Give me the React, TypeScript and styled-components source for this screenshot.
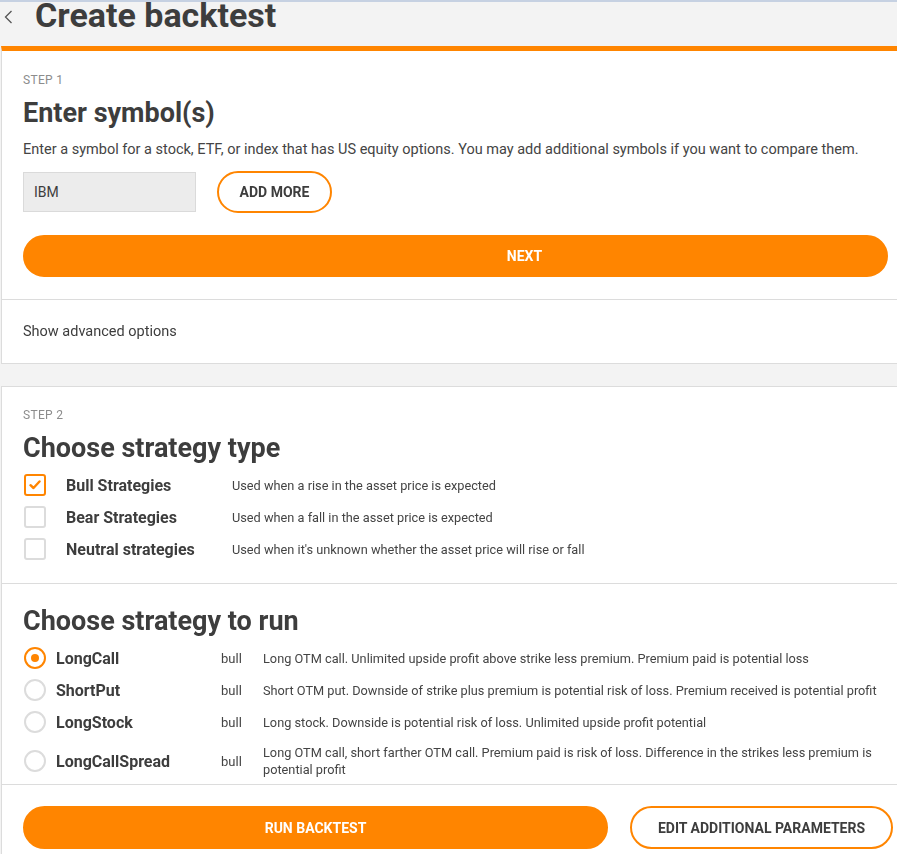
import React, { useState } from "react";
import styled, { createGlobalStyle } from "styled-components";

const ORANGE = "#ff8500";
const TEXT = "#3d3d3d";

const GlobalStyle = createGlobalStyle`
  html, body {
    margin: 0;
    padding: 0;
    background: #f3f3f3;
    font-family: Roboto, "Noto Sans", Arial, sans-serif;
    color: ${TEXT};
    overflow: hidden;
  }
  * { box-sizing: border-box; }
`;

const Page = styled.div`
  width: 897px;
  border-top: 2px solid #c6d1e2;
`;

const Header = styled.div`
  height: 44px;
  display: flex;
  align-items: flex-start;
  padding-left: 4px;
  gap: 22px;
`;

const BackButton = styled.button`
  border: 0;
  background: none;
  padding: 0;
  width: 9px;
  height: 14px;
  display: flex;
  margin-top: 8px;
  cursor: pointer;
`;

const Title = styled.h1`
  margin: -4px 0 0;
  font-size: 34px;
  font-weight: 700;
  line-height: 34px;
  color: ${TEXT};
`;

const Card = styled.div<{ $accent?: boolean }>`
  background: #fff;
  margin-left: 1px;
  margin-right: -4px;
  border: 1px solid #dcdcdc;
  border-top: ${(p) => (p.$accent ? `5px solid ${ORANGE}` : "1px solid #dcdcdc")};
`;

const Section = styled.div<{ $top?: number; $bottom?: number }>`
  padding: ${(p) => p.$top ?? 20}px 12px ${(p) => p.$bottom ?? 0}px 21px;
  & + & {
    border-top: 1px solid #dcdcdc;
  }
`;

const Step = styled.div`
  font-size: 12px;
  line-height: 16px;
  color: #8c8c8c;
  letter-spacing: 0.3px;
`;

const Heading = styled.h2<{ $gap?: number }>`
  margin: ${(p) => p.$gap ?? 9}px 0 0;
  font-size: 27px;
  font-weight: 700;
  line-height: 32px;
  color: ${TEXT};
`;

const Lead = styled.p`
  margin: 11px 0 0;
  font-size: 14.5px;
  line-height: 20px;
  color: #444;
`;

const InputRow = styled.div`
  display: flex;
  align-items: center;
  gap: 21px;
  margin-top: 11px;
  height: 42px;
`;

const SymbolInput = styled.input`
  width: 173px;
  height: 40px;
  border: 1px solid #dadada;
  background: #ececec;
  padding: 0 10px;
  font-family: inherit;
  font-size: 14px;
  color: ${TEXT};
  outline: none;
  caret-color: #222;
`;

const PillButton = styled.button<{ $filled?: boolean; $width?: number; $height?: number; $shift?: number }>`
  height: ${(p) => p.$height ?? 42}px;
  width: ${(p) => (p.$width ? `${p.$width}px` : "auto")};
  flex: ${(p) => (p.$width ? "none" : "1")};
  border-radius: 22px;
  border: 2px solid ${ORANGE};
  background: ${(p) => (p.$filled ? ORANGE : "#fff")};
  color: ${(p) => (p.$filled ? "#fff" : TEXT)};
  padding: 0 0 0 ${(p) => p.$shift ?? 0}px;
  font-family: inherit;
  font-size: 14px;
  font-weight: 700;
  text-transform: uppercase;
  cursor: pointer;
`;

const NextRow = styled.div`
  display: flex;
  margin-top: 22px;
  padding-bottom: 22px;
`;

const Advanced = styled.button`
  display: block;
  width: 100%;
  text-align: left;
  height: 63px;
  border: 0;
  background: none;
  padding: 0;
  font-family: inherit;
  font-size: 14.5px;
  color: ${TEXT};
  cursor: pointer;
`;

const Gap = styled.div`
  height: 22px;
`;

const TypeList = styled.div`
  margin-top: 5px;
  padding-bottom: 18px;
`;

const TypeRow = styled.label`
  display: grid;
  grid-template-columns: 43px 166px 1fr;
  align-items: center;
  height: 32px;
  cursor: pointer;
`;

const Box = styled.span<{ $checked?: boolean }>`
  width: 22px;
  height: 22px;
  border-radius: 3px;
  border: 2px solid ${(p) => (p.$checked ? ORANGE : "#dcdcdc")};
  display: flex;
  align-items: center;
  justify-content: center;
  margin-left: 1px;
`;

const Name = styled.span`
  font-size: 16px;
  font-weight: 700;
  color: ${TEXT};
`;

const Desc = styled.span`
  font-size: 12.75px;
  line-height: 17px;
  color: #444;
`;

const RunList = styled.div`
  margin-top: 5px;
`;

const RunRow = styled.label<{ $tall?: boolean }>`
  display: grid;
  grid-template-columns: 33px 165px 42px 1fr;
  align-items: center;
  min-height: ${(p) => (p.$tall ? 46 : 32)}px;
  cursor: pointer;
`;

const Radio = styled.span<{ $checked?: boolean }>`
  width: 22px;
  height: 22px;
  border-radius: 50%;
  border: 2px solid ${(p) => (p.$checked ? ORANGE : "#dcdcdc")};
  display: flex;
  align-items: center;
  justify-content: center;
  margin-left: 1px;
  &::after {
    content: "";
    width: 8px;
    height: 8px;
    border-radius: 50%;
    background: ${(p) => (p.$checked ? ORANGE : "transparent")};
  }
`;

const Kind = styled.span`
  font-size: 13px;
  color: #444;
`;

const Footer = styled.div`
  border-top: 1px solid #dcdcdc;
  display: flex;
  gap: 22px;
  padding: 21px 7px 8px 21px;
`;

const types = [
  { name: "Bull Strategies", desc: "Used when a rise in the asset price is expected" },
  { name: "Bear Strategies", desc: "Used when a fall in the asset price is expected" },
  { name: "Neutral strategies", desc: "Used when it's unknown whether the asset price will rise or fall" },
];

const strategies = [
  {
    name: "LongCall",
    desc: "Long OTM call. Unlimited upside profit above strike less premium. Premium paid is potential loss",
  },
  {
    name: "ShortPut",
    desc: "Short OTM put. Downside of strike plus premium is potential risk of loss. Premium received is potential profit",
  },
  {
    name: "LongStock",
    desc: "Long stock. Downside is potential risk of loss. Unlimited upside profit potential",
  },
  {
    name: "LongCallSpread",
    desc: "Long OTM call, short farther OTM call. Premium paid is risk of loss. Difference in the strikes less premium is potential profit",
  },
];

const Check = () => (
  <svg width="12" height="10" viewBox="0 0 12 10">
    <path d="M1.5 5.2 L4.5 8 L10.5 1.5" fill="none" stroke={ORANGE} strokeWidth="2.4" strokeLinecap="round" strokeLinejoin="round" />
  </svg>
);

export default function App() {
  const [symbol, setSymbol] = useState("IBM");
  const [checked, setChecked] = useState<string[]>(["Bull Strategies"]);
  const [strategy, setStrategy] = useState("LongCall");

  const toggle = (name: string) =>
    setChecked((c) => (c.includes(name) ? c.filter((n) => n !== name) : [...c, name]));

  return (
    <>
      <GlobalStyle />
      <Page>
        <Header>
          <BackButton aria-label="Back">
            <svg width="9" height="14" viewBox="0 0 9 14">
              <polyline points="7.5,1 1.5,7 7.5,13" fill="none" stroke="#555" strokeWidth="1.3" />
            </svg>
          </BackButton>
          <Title>Create backtest</Title>
        </Header>

        <Card $accent>
          <Section $top={21}>
            <Step>STEP 1</Step>
            <Heading>Enter symbol(s)</Heading>
            <Lead>
              Enter a symbol for a stock, ETF, or index that has US equity options. You may add additional symbols if you
              want to compare them.
            </Lead>
            <InputRow>
              <SymbolInput value={symbol} onChange={(e) => setSymbol(e.target.value)} autoFocus />
              <PillButton $width={115}>Add more</PillButton>
            </InputRow>
            <NextRow>
              <PillButton $filled $shift={138}>Next</PillButton>
            </NextRow>
          </Section>
          <Section $top={0}>
            <Advanced>Show advanced options</Advanced>
          </Section>
        </Card>

        <Gap />

        <Card>
          <Section $top={20}>
            <Step>STEP 2</Step>
            <Heading>Choose strategy type</Heading>
            <TypeList>
              {types.map((t) => (
                <TypeRow key={t.name} onClick={() => toggle(t.name)}>
                  <Box $checked={checked.includes(t.name)}>{checked.includes(t.name) && <Check />}</Box>
                  <Name>{t.name}</Name>
                  <Desc>{t.desc}</Desc>
                </TypeRow>
              ))}
            </TypeList>
          </Section>
          <Section $top={21}>
            <Heading $gap={0}>Choose strategy to run</Heading>
            <RunList>
              {strategies.map((s, i) => (
                <RunRow key={s.name} $tall={i === 3} onClick={() => setStrategy(s.name)}>
                  <Radio $checked={strategy === s.name} />
                  <Name>{s.name}</Name>
                  <Kind>bull</Kind>
                  <Desc>{s.desc}</Desc>
                </RunRow>
              ))}
            </RunList>
          </Section>
          <Footer>
            <PillButton $filled $height={43}>Run backtest</PillButton>
            <PillButton $width={263} $height={43}>Edit additional parameters</PillButton>
          </Footer>
        </Card>
      </Page>
    </>
  );
}
